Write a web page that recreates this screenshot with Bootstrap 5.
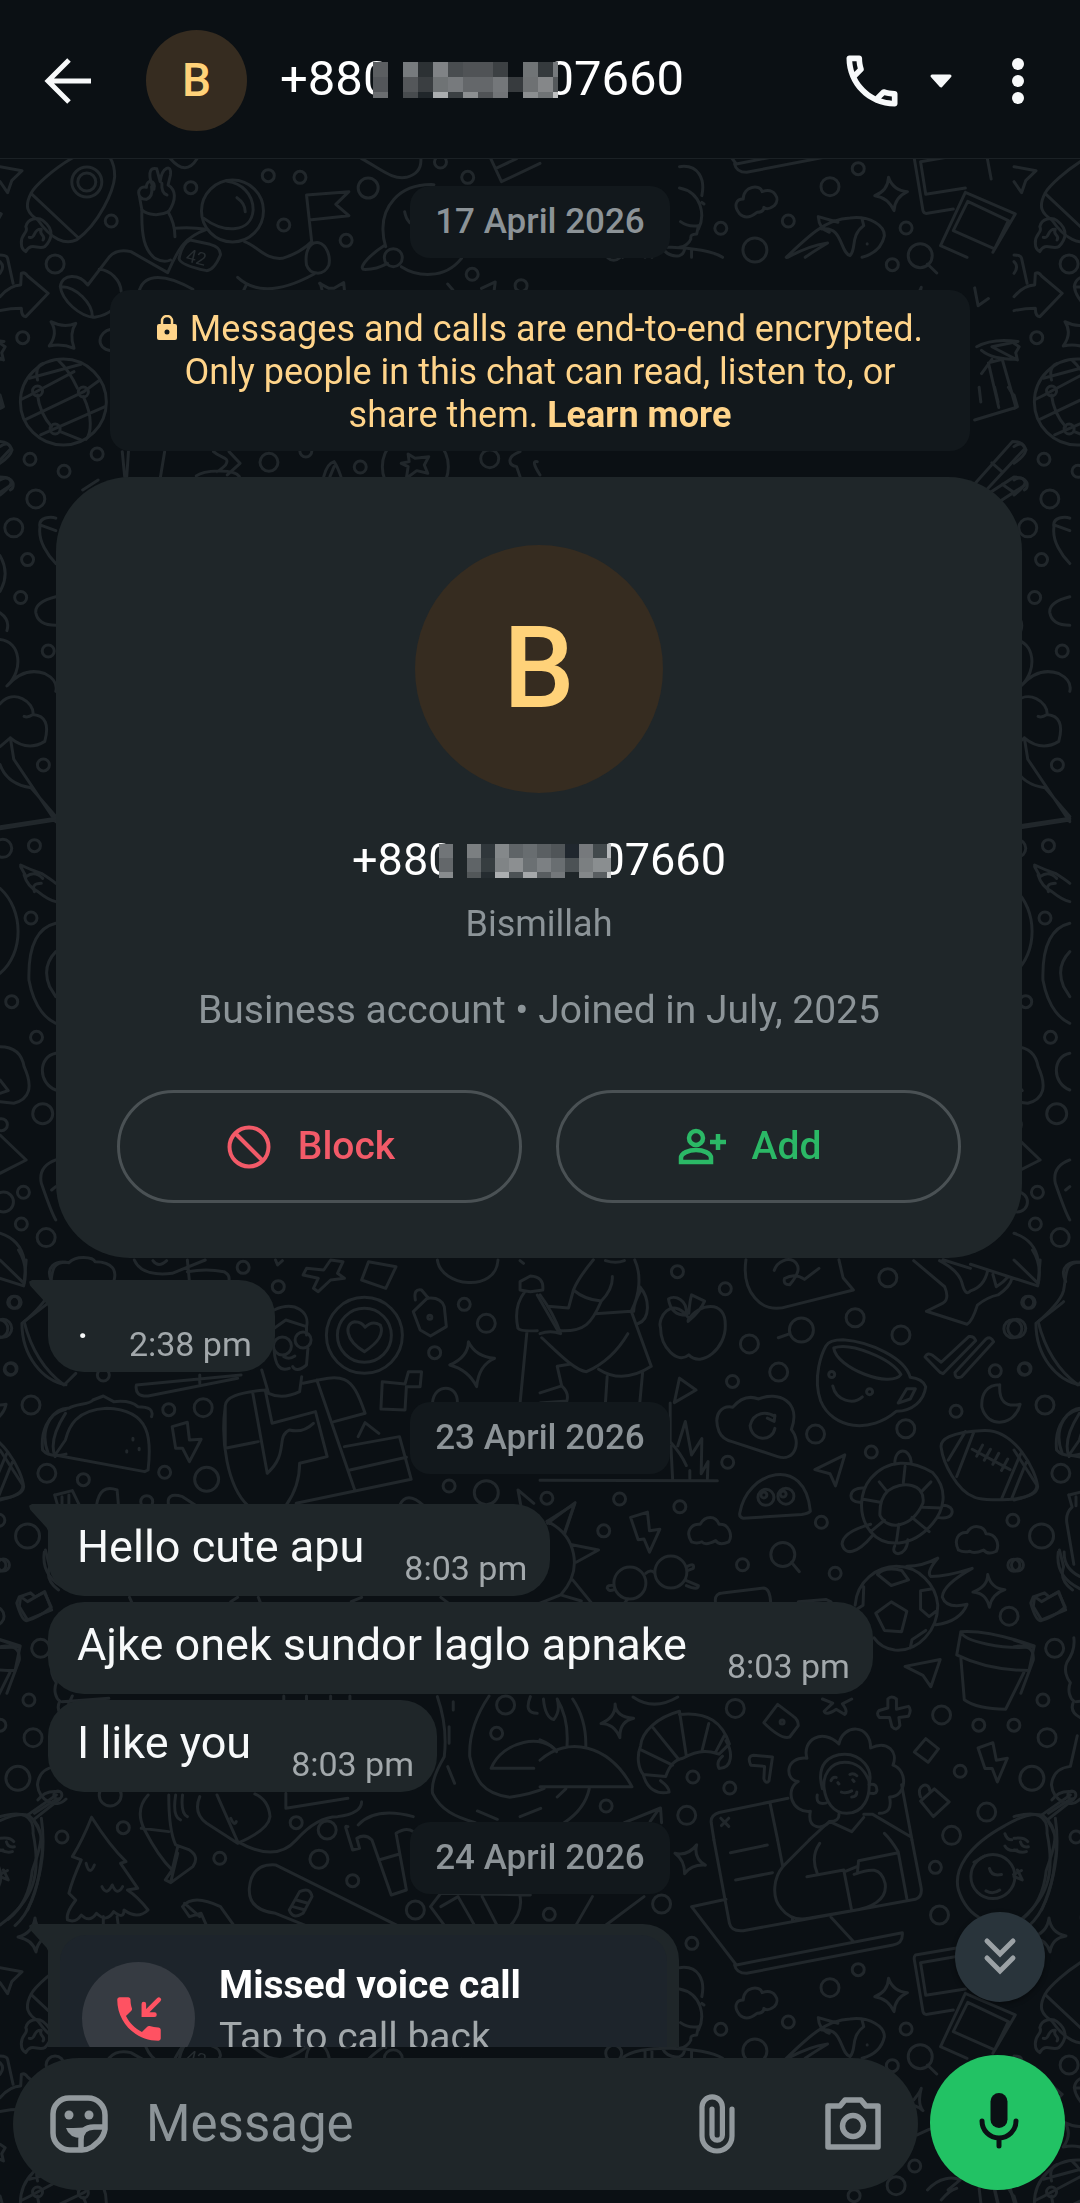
<!DOCTYPE html>
<html lang="en" data-bs-theme="dark">
<head>
<meta charset="utf-8">
<meta name="viewport" content="width=device-width, initial-scale=1">
<title>Chat</title>
<link href="https://cdn.jsdelivr.net/npm/bootstrap@5.3.0/dist/css/bootstrap.min.css" rel="stylesheet">
<style>
  body { font-family: Roboto, "Noto Sans", sans-serif; background: #0b1014; color: #f7f9fa; }
  button { color: inherit; }
  .bare { border: 0; background: none; padding: 0; display: flex; flex-shrink: 0; }
  .wallpaper { inset: 0; width: 100%; height: 100%; z-index: 0; }
  .wallpaper path, .wallpaper ellipse { fill: none; stroke: #21272b; stroke-width: 3px; vector-effect: non-scaling-stroke; stroke-linecap: round; stroke-linejoin: round; }
  .wallpaper text { fill: #262c30; font-size: 18px; }
  .topbar { padding: 30px 50px 27px 38px; background: #0b1014; border-bottom: 1px solid #1b2125; z-index: 2; }
  .call-menu { margin-left: 23px; }
  .more-menu { margin-left: 53px; }
  .initial { border-radius: 50%; background: #362c20; color: #ffd279; font-weight: 500; }
  .initial-sm { width: 101px; height: 101px; font-size: 46px; margin-left: 48px; }
  .initial-lg { width: 248px; height: 248px; font-size: 113px; }
  .caller { font-size: 49px; line-height: 56px; margin: 0 0 0 33px; padding-bottom: 3px; font-weight: 400; }
  .person { font-size: 45px; line-height: 56px; margin: 39px 0 0; font-weight: 400; }
  .caller svg, .person svg { position: relative; flex-shrink: 0; }
  .caller svg { margin: 2px -12px 0 -17px; }
  .person svg { margin: 2px -12px 0 -14px; }
  .thread { z-index: 1; padding: 27px 48px 0; }
  .chip { width: 260px; padding: 14px 0; line-height: 44px; font-size: 35px; font-weight: 500; color: #8c9397; background: #12181c; border-radius: 20px; text-align: center; }
  .day-break { margin: 30px 0; }
  .notice { max-width: 860px; margin: 32px 0 26px; padding: 18px 40px 14px; background: #12181c; color: #ffd48a; border-radius: 20px; font-size: 36px; line-height: 43px; text-align: center; }
  .notice svg { margin: -6px 13px 0 0; }
  .notice a { color: inherit; font-weight: 700; text-decoration: none; }
  .profile { align-self: stretch; margin: 0 10px 22px 8px; padding: 68px 61px 55px; background: #1f2629; border-radius: 74px; }
  .soft { color: #8c9498; }
  .nick { font-size: 36px; line-height: 44px; margin: 14px 0 0; }
  .since { font-size: 39px; line-height: 46px; margin: 41px 0 57px; }
  .choices { gap: 34px; }
  .choice { height: 113px; border: 3px solid #4a5154; border-radius: 57px; background: none; font-size: 39px; font-weight: 500; gap: 26px; padding: 0 18px 0 0; }
  .choice-block { color: #f25a68; }
  .choice-add { color: #2bb866; }
  .bubble { align-self: flex-start; position: relative; background: #1f2629; border-radius: 36px; padding: 16px 23px 8px 29px; }
  .bubble p { font-size: 45px; line-height: 53px; margin: 0; }
  .bubble time { font-size: 34px; line-height: 40px; margin: 28px 0 0 40px; color: #a2a8ab; }
  .bubble + .bubble { margin-top: 6px; }
  .tailed { border-top-left-radius: 0; }
  .tailed::before { content: ""; position: absolute; left: -19px; top: 0; width: 20px; height: 29px; background: #1f2629; clip-path: polygon(0 6%, 15% 0, 100% 0, 100% 100%, 88% 82%, 6% 20%); }
  .call-bubble { padding: 11px 12px; width: 631px; }
  .call-box { background: #1d242b; border-radius: 26px; padding: 27px 22px 27px; gap: 24px; }
  .call-dot { width: 113px; height: 113px; border-radius: 50%; background: #363b42; color: #ff5262; }
  .call-box h2 { font-size: 39px; line-height: 46px; font-weight: 700; margin: 0; }
  .call-box p { font-size: 39px; line-height: 46px; margin: 6px 0 0; color: #a2a8ab; }
  .to-end { position: absolute; right: 35px; bottom: 45px; width: 90px; height: 90px; border-radius: 50%; border: 0; background: #29343b; color: #9ba1a5; z-index: 3; box-shadow: 0 2px 5px #0006; }
  .composer { padding: 8px 15px 13px 13px; gap: 12px; z-index: 2; }
  .entry { height: 132px; min-width: 0; border-radius: 66px; background: #1f2629; padding: 0 35px 0 34px; color: #92999d; }
  .entry input { border: 0; background: none; font-size: 51px; color: #f7f9fa; outline: 0; margin-left: 35px; padding: 0; min-width: 0; }
  .entry input::placeholder { color: #8c9498; opacity: 1; }
  .camera { margin-left: 88px; }
  .mic { width: 135px; height: 135px; border-radius: 50%; border: 0; background: #22c264; color: #0b1014; padding: 0 0 4px 2px; }
</style>
</head>
<body>
<svg class="wallpaper position-fixed" viewBox="0 0 1080 2203" preserveAspectRatio="xMidYMin slice" aria-hidden="true">
 <defs>
 <g id="tile">
  <!-- rocket, astronaut, planet, globe -->
  <g transform="translate(0 150) scale(.3444 .3333)" data-rings="252,96,15 252,96,9 323,213,6 160,342,9 66,563,6 87,928,6 186,964,6 282,912,6 554,113,6 675,183,31 779,77,6 871,82,6 824,225,6 1005,271,6 1069,114,10 1279,36,6 1358,82,6 1371,373,6 1142,323,9 1513,407,6 781,937,9 1046,951,6 1422,926,9 1206,950,33 184,756,43 109,723,5 242,726,5 160,837,5 888,903,6">
   <path d="M0 50L64 62L34 92L22 128L0 95M210 24C150 60 100 110 90 130C70 170 80 190 110 210C150 270 190 285 222 270C290 220 330 120 333 80Q333 45 320 24M90 130L228 264"/>
   <path d="M62 280C60 250 85 248 75 230C80 205 110 200 125 212C160 240 150 270 130 290C110 300 90 275 75 305C65 300 62 290 62 280M85 262C105 268 95 235 120 238C110 255 135 255 125 270"/>
   <path d="M425 148C395 150 395 105 425 112C425 85 455 90 447 118C430 80 430 50 455 56L465 95C470 50 500 40 495 75L488 105C512 120 512 150 490 185C460 200 430 195 412 180L405 140M470 100Q468 130 485 135M440 110Q445 140 425 148"/>
   <path d="M412 180C410 260 420 300 450 325Q475 340 495 330M488 185Q508 220 508 260M508 235Q550 230 600 238C540 260 520 290 487 368L380 305Q340 295 318 320L255 405C230 370 180 370 175 410C180 450 230 500 275 502Q310 495 325 480M180 410C220 410 270 460 268 502M288 358C320 360 350 390 352 425"/>
   <path d="M592 205C650 250 730 250 735 180C735 130 700 100 660 94M688 143Q712 160 712 185M552 270Q530 278 520 325Q522 345 600 362Q622 360 640 315Q642 292 610 283Z"/>
   <path d="M710 275C750 290 770 330 820 325Q870 310 905 275M690 382C740 430 810 430 912 372M715 405L708 420M905 275L890 135L1013 125L975 163L1013 197L898 210M925 278C950 285 960 320 955 345C940 380 900 375 890 345C885 310 895 275 925 278"/>
   <path d="M405 420C420 370 480 370 560 418M1260 104C1150 100 1110 180 1112 240Q1112 265 1120 290M1165 350C1210 380 1290 390 1340 325M1118 285C1080 310 1040 350 1055 358Q1090 360 1125 340M1175 185Q1178 205 1190 218M930 400L935 420M928 400L955 415L970 415L998 398L1000 420M1300 402L1315 420M1398 415L1438 396L1435 420"/>
   <path d="M495 26Q540 80 572 26M1050 26C1110 60 1140 90 1180 82Q1225 70 1222 26M1425 26L1456 95L1568 40M1440 55L1500 26"/>
   <path d="M0 440Q30 405 60 405L62 370Q72 365 80 378L140 430L75 500Q62 500 62 475Q30 475 0 482M0 315Q20 315 22 325L38 400M0 335Q15 350 0 370M0 580L15 590L5 608L10 630L0 625M0 735L10 770L0 775"/>
   <path d="M148 515Q185 535 220 520Q200 550 215 595Q180 580 143 588Q170 550 148 515ZM322 538C285 545 275 595 322 602M85 685L235 643M62 748Q80 740 109 723L215 665M75 808L242 726L290 690M118 855L305 770M109 690Q100 650 125 640M109 735Q115 790 150 830M242 740C270 800 265 850 250 868M225 715Q200 660 170 632M175 845L235 870"/>
   <path d="M0 890Q25 870 35 900Q30 920 0 940M0 990Q25 975 38 1000Q40 1015 30 1020M355 905L362 980M373 905L368 980M478 905L466 980M620 905C640 925 670 920 655 945Q640 960 630 965M665 905L697 940L660 975M570 978C590 960 680 955 695 980M940 980Q950 940 970 935Q980 950 990 980M958 980L970 950M1185 912L1205 925L1245 920L1232 945L1242 970L1210 962L1180 985L1185 950L1165 940L1188 935ZM1510 905C1470 920 1475 945 1500 950L1510 980M1568 975Q1540 930 1560 935M240 1020L285 990"/>
  </g>
  <!-- curls, whale, polaroids -->
  <g transform="translate(540 39) scale(.3444 .3333)" data-rings="27,223,6 353,192,9 441,310,6 924,389,6 842,443,9 721,546,6 525,568,6 624,633,12 1063,567,6 1104,650,12 1023,677,6 1160,225,9 1148,82,6 1088,978,6 1034,1037,9 912,1067,6 214,640,8">
   <path d="M540 178L440 200L570 375L1052 278Q1055 310 1025 315L600 400Q570 400 565 375M505 0L550 250Q555 275 590 272L1090 178Q1112 170 1106 140L1080 0M690 0L705 80M553 38L660 15M568 120L675 98M782 0L705 80C680 110 670 170 700 205Q730 245 780 235L905 212L882 90L775 110M805 100Q785 50 812 10M885 95L920 80M905 212C960 205 1010 180 1002 130C990 80 960 85 912 103M1065 175L1040 35Q1020 0 1000 -20M922 95L925 62L1040 38M845 232L908 302M733 232V240"/>
   <path d="M405 383C460 375 480 420 470 470M405 447C470 460 480 530 460 570M408 548Q430 565 460 560L455 585Q435 585 438 600Q430 620 405 625M470 490L476 495M240 655C280 610 480 620 530 655M355 625Q370 655 405 650Q420 645 420 625M305 632V655M325 632V655M440 632V655"/>
   <path d="M580 525C560 500 570 480 590 480C590 440 640 435 645 458C680 445 700 480 680 500Q660 515 650 505Q650 520 630 520Q600 545 580 525ZM1012 415Q1025 455 1067 458Q1030 475 1028 515Q1010 475 972 470Q1010 455 1012 415Z"/>
   <path d="M715 655C780 590 830 540 900 537C960 530 1000 560 1000 590Q990 640 935 655M808 533Q810 570 840 580M808 533L865 550M720 655Q780 620 835 612Q790 640 770 655M818 570C880 560 870 640 900 650C920 630 900 590 940 560L935 540M950 614V615"/>
   <path d="M1205 325L1090 345Q1085 350 1087 360L1112 515Q1115 525 1125 523L1200 510M1205 350L1105 368L1120 466L1235 447M1205 325L1290 310L1310 420M1235 460L1380 525L1315 640M1235 460L1163 620L1240 655M1242 487L1360 545L1320 630L1200 575ZM1125 675L1152 702M1085 780Q1105 755 1107 745Q1095 790 1112 812Q1100 800 1080 795M1095 885L1130 868M1125 1050C1160 1010 1200 1010 1220 1020L1185 1050M1165 1080Q1190 1050 1210 1045M1275 1045L1280 1089M1320 1045L1330 1089M1360 1045L1375 1070"/>
  </g>
  <!-- right half: apron cook, apple, coffee, turtle, football, plants -->
  <g transform="translate(540 1250) scale(.3444 .4082)" data-rings="399,53,6 538,95,6 608,230,9 693,299,9 759,196,12 915,166,9 1010,68,9 1048,208,9 1373,193,9 1322,296,6 1406,292,6 1416,128,6 559,322,6 800,451,9 1062,438,9 962,495,6 1208,395,6 545,520,6 20,608,6 231,610,6 406,629,6 185,688,6 588,771,6 817,667,6 857,792,6 705,746,12 1373,662,6 1376,772,6 1362,897,9 567,1123,9 444,1291,6 551,1318,6 426,1385,9 192,1362,6 1166,1139,9 1274,1164,6 1376,1164,6 1220,1277,6 1297,1377,9 1195,1434,9 847,305,3 957,347,3 703,1156,2 380,789,16 261,816,16 656,606,8 714,603,8 650,600,3 706,598,3 1315,1535,22">
   <path d="M155 24Q110 70 97 98Q130 122 178 125Q212 95 210 65M97 98L83 142L22 138M0 110Q40 155 60 205Q30 195 0 205M160 156L265 150C290 110 295 60 275 24M265 150L323 285Q240 330 170 292M178 125C150 180 130 200 60 198M5 215C50 250 100 295 135 298Q210 270 255 205M50 285L63 333L0 350M50 285L85 280M63 333Q85 350 78 370L0 375M195 310L190 375M298 300L290 372M290 90C320 120 320 170 285 180M292 100Q272 130 272 150M190 26Q220 34 245 26"/>
   <path d="M430 165C380 110 340 170 350 190C350 240 400 280 432 257C470 290 540 240 538 185C540 120 460 130 430 172M425 160C430 120 390 110 373 120Q380 160 425 160M432 155Q435 125 440 110L478 125Q465 150 430 175"/>
   <path d="M598 24C585 100 640 160 720 138L910 98L880 68L868 24M680 50C690 25 720 20 735 26C760 40 750 60 725 85Q705 85 710 70Q740 55 768 72L810 45M722 206L692 215"/>
   <path d="M1085 26L1175 90Q1190 120 1170 130L1122 150L1240 182Q1255 175 1270 135Q1300 115 1330 110Q1365 90 1370 70M1160 26Q1215 50 1225 80Q1235 115 1250 100Q1290 90 1300 50M1315 60L1325 90Q1345 80 1360 65M1250 35L1445 88Q1460 40 1430 0M1250 45L1170 24"/>
   <path d="M830 235Q840 220 880 220C960 225 1060 265 1075 312Q1110 315 1120 335C1115 370 1080 395 1035 395C960 450 850 440 815 370C790 310 820 250 830 235ZM853 240C900 225 1020 265 1048 305C1020 340 860 290 853 240ZM1040 375L1065 340L1090 340L1075 365ZM850 333C860 370 910 380 936 360"/>
   <path d="M1118 262Q1125 250 1140 258L1165 275L1245 212Q1260 210 1265 222L1170 303L1162 300ZM1205 300L1295 218Q1310 210 1317 225L1225 310Q1205 318 1205 300M1335 330C1300 330 1280 350 1283 385C1300 440 1380 430 1394 378Q1330 390 1335 330"/>
   <path d="M405 314L390 374L453 343ZM520 445C500 400 530 380 560 385C590 355 620 360 635 365C690 345 760 370 730 440C760 470 740 520 690 506L560 470Q530 465 520 445M682 408C660 395 620 395 610 430C615 470 675 470 682 437M682 405L680 420L660 412"/>
   <path d="M378 470Q410 500 425 528M378 470V375M380 480L385 560M400 480L422 420L440 502L470 462L468 548L488 518L486 560M435 540V560M0 564L515 565"/>
   <path d="M580 645C600 540 770 500 785 640Q780 645 760 648L590 657Q578 655 580 645M798 538L885 502L858 578L842 548Z"/>
   <path d="M960 560C1010 510 1080 515 1140 545C1190 590 1170 640 1140 670C1080 730 1000 730 960 690C920 650 930 590 960 560ZM1010 590C1050 565 1120 570 1112 620C1080 680 1010 690 987 650Q985 610 1010 590M985 568L1008 592M1060 530L1055 570M1135 568L1108 592M1165 632L1110 630M1130 690L1080 655M1035 715L1042 672M960 690L1000 662M935 610L988 618M1030 525C1030 480 1075 485 1078 520M940 583C895 580 890 620 930 618M1170 625C1210 625 1205 665 1155 655M1030 725C1015 750 1065 755 1068 710M960 672Q880 690 877 720C885 750 920 745 965 700"/>
   <path d="M1165 485C1160 465 1190 445 1290 442C1380 440 1440 540 1445 580C1440 620 1280 615 1260 605C1210 590 1170 520 1165 485ZM1185 515L1235 445M1210 555L1260 445M1340 610L1395 500M1370 608L1412 520M1255 488L1365 538M1268 505L1285 478M1290 515L1308 488M1315 525L1332 498M1340 540L1358 512"/>
   <path d="M263 655L312 642L318 688L348 684L318 740L302 708L285 710ZM440 715C420 690 440 670 465 672C480 650 510 650 520 672C550 670 560 700 548 715Q520 725 510 712Q480 725 470 715Q455 720 440 715M1215 735C1200 710 1215 690 1240 692C1255 670 1290 675 1295 695C1325 695 1335 720 1325 738Q1300 748 1288 735Q1260 745 1248 738Q1230 742 1215 735"/>
   <path d="M20 665L100 622L70 695M93 722L170 735L105 765M95 808L150 865M28 668C100 700 130 780 60 845L0 865M60 845L120 860M20 665L28 670M307 792Q320 782 332 790M213 822Q195 820 195 828Q200 838 215 832M428 775Q450 765 445 780L430 785M425 810L460 822Q460 835 425 822M245 865L255 855M730 765L753 788M510 865C505 845 520 840 530 840L650 828Q668 830 670 865M750 862L830 856L845 862"/>
   <path d="M915 870C920 810 980 775 1035 775C1100 775 1150 820 1155 870C1155 930 1100 985 1030 980Q990 975 970 950M975 890L1020 862L1065 885L1050 935L1000 932ZM980 795Q1000 775 1050 785L1070 808L1020 822ZM1105 835L1140 830M1105 835L1105 880L1130 898L1150 885M940 825L938 870L920 880M1075 975L1080 955L1120 932M1065 775Q1110 775 1155 755Q1120 790 1135 800Q1180 800 1255 780Q1170 820 1168 850Q1180 880 1240 868Q1220 910 1150 918M1300 795Q1310 830 1350 832Q1312 842 1305 875Q1295 840 1257 838Q1300 825 1300 795M1432 850L1465 840L1478 850L1505 838L1525 875Q1490 900 1455 908Q1440 910 1425 865Z"/>
   <path d="M1222 935Q1300 930 1435 970L1420 1030Q1300 1030 1210 992ZM1222 935C1230 960 1350 980 1432 972M1222 1000L1232 1102Q1270 1125 1352 1125L1405 1035M1060 1020L1162 1003L1135 1070L1112 1042ZM1010 1100Q1020 1090 1035 1100L1035 1125L1070 1118Q1080 1125 1070 1142L1042 1145L1045 1165Q1035 1180 1022 1168L1015 1145L985 1145Q975 1135 985 1128L1010 1122ZM820 1100L850 1110L825 1130Q830 1142 860 1125L885 1138Q895 1130 878 1112L905 1100"/>
   <path d="M218 1112Q220 1145 272 1147Q230 1155 232 1195Q215 1160 177 1160Q220 1145 218 1112M405 1130C340 1145 295 1180 292 1215C280 1240 285 1270 300 1285L365 1290Q380 1250 415 1245C470 1220 500 1230 520 1235L550 1210C530 1160 490 1130 405 1138M328 1170L400 1245M405 1130L425 1240M490 1160L470 1228M535 1190L510 1230M295 1225L385 1262M300 1285C310 1320 340 1335 375 1328Q375 1315 350 1300M540 1202C560 1230 560 1270 520 1270Q510 1255 530 1240"/>
   <path d="M690 1113L650 1158Q700 1200 725 1193L750 1165Q750 1150 735 1142ZM612 1262Q600 1240 620 1238L675 1242L665 1300Q655 1310 650 1295L652 1265ZM1120 1197L1157 1222L1127 1255L1087 1230ZM1272 1220L1315 1207L1325 1250L1357 1245L1328 1303L1313 1270L1292 1270ZM1145 1320L1188 1352L1142 1388L1105 1350ZM1105 1340C1090 1310 1130 1300 1132 1325"/>
   <path d="M0 1250C80 1190 200 1210 267 1315H0M0 1200Q30 1210 45 1225M78 1218Q85 1150 50 1100M133 1218Q135 1150 95 1100M10 1100Q15 1145 40 1150Q60 1130 50 1100M50 1340L75 1320M143 1320Q130 1370 70 1403M245 1403L350 1367L353 1403M320 1400L345 1370M270 1095Q330 1130 400 1095"/>
   <path d="M775 1245C760 1200 820 1170 868 1210C880 1160 960 1160 960 1220C1010 1200 1040 1230 1025 1262C1070 1275 1065 1340 1015 1340Q1025 1380 985 1380M775 1245C710 1240 710 1300 750 1302C710 1320 730 1380 785 1375C775 1420 820 1420 840 1402M820 1320C800 1260 840 1235 885 1235C930 1235 970 1270 955 1310M825 1320C830 1350 850 1380 890 1380C940 1380 960 1340 955 1300C940 1270 920 1255 885 1255C840 1255 820 1290 825 1320M875 1328Q890 1332 905 1325M845 1300Q850 1290 860 1292M900 1285Q910 1280 920 1288M865 1305L868 1308M908 1298L912 1302M905 1340Q920 1340 920 1328M805 1335Q800 1360 830 1355M955 1310Q980 1305 978 1325Q975 1335 955 1330"/>
   <path d="M868 1382Q870 1400 840 1400L782 1445M840 1400L905 1425L940 1390M940 1382L965 1382L1075 1437M1050 1310L1080 1445M720 1343L520 1378Q495 1385 497 1402L505 1445M668 1355L690 1445M525 1392L548 1412M548 1392L527 1410M392 1478Q430 1485 455 1457Q445 1490 480 1507Q440 1505 420 1528Q420 1495 392 1478M1460 1385Q1420 1375 1350 1410C1240 1460 1200 1520 1215 1568Q1235 1620 1285 1640M1460 1385C1510 1420 1500 1450 1470 1520Q1460 1600 1400 1640M1475 1400Q1510 1440 1495 1500Q1480 1610 1420 1655M1455 1385L1540 1335M1475 1395L1550 1345M1350 1430Q1355 1445 1370 1445M1350 1460Q1360 1475 1385 1470M1395 1450Q1400 1465 1418 1462M1305 1515Q1310 1535 1340 1530M1260 1500L1290 1485M1375 1530L1398 1520M1295 1570Q1315 1580 1335 1568"/>
   <path d="M1568 30C1520 30 1530 60 1520 100Q1510 130 1440 180C1440 260 1500 320 1568 330M1568 390C1510 400 1495 450 1500 490Q1520 510 1568 500M1535 600L1545 630Q1525 645 1530 670L1550 770M1505 740Q1495 800 1568 830M1522 740Q1520 780 1568 800M1550 950Q1555 980 1530 1010C1520 1030 1530 1050 1540 1060C1530 1080 1540 1100 1550 1105Q1535 1130 1568 1145M1560 1190L1540 1265Q1490 1270 1485 1310C1490 1350 1540 1370 1568 1345"/>
  </g>
  <!-- left half, upper: grandpa, token, taco, books -->
  <g transform="translate(0 1240) scale(.6888 .3333)" data-rings="404,140,6 353,82,6 529,286,38 529,286,27 674,193,6 706,250,9 631,338,6 45,495,9 16,386,6 245,509,6 295,503,9 239,697,6 68,700,9 121,719,6 300,718,12 652,738,6 706,758,12 150,405,6 22,187,6 4,265,9 40,888,12 213,785,6 410,318,9 440,300,8 624,232,2">
   <path d="M75 125C65 80 80 60 100 68C110 45 135 50 138 65C165 65 170 95 165 125M195 60Q205 110 250 100L298 60M222 62Q230 85 242 62M272 60L275 125M272 95Q300 85 325 95Q335 105 332 125M445 85L470 90L480 60L498 65L490 100L500 115L480 120L462 155L455 145L462 115L440 105ZM525 120L535 65L575 80L560 145ZM635 60C640 140 720 160 723 60M400 60L403 75L410 62M755 62L760 70"/>
   <path d="M529 335C500 300 500 250 515 245Q525 245 530 262Q540 240 552 255C560 290 540 320 529 335M600 215L620 175Q640 170 645 200L648 260L625 288L610 270ZM603 180Q600 145 612 150L622 175M653 375Q680 350 680 305Q690 350 718 355Q695 375 692 440Q680 390 653 375M555 425L588 432L593 395H612L610 440L590 440L588 510L553 507ZM628 488C630 430 665 430 664 488"/>
   <path d="M398 210C430 180 450 220 445 260L415 240L398 265M445 260V285M398 330Q400 400 420 385M447 325L445 375Q430 400 425 380M380 390L390 460Q410 480 435 455L438 410M412 350Q420 360 428 348M198 435L350 405M198 435Q195 470 215 468L345 415M290 405V430M327 500C320 600 330 740 360 797M385 450Q325 460 327 500V625L375 605M367 460L388 700M385 450L395 550L458 515L475 650L435 670M388 700C420 640 400 590 420 570Q440 580 455 550M435 670Q435 740 415 797M440 430C500 400 510 400 530 520L485 545M460 420L515 750M430 790L597 718L580 590L500 620M520 590L530 548L550 580M508 690L590 652"/>
   <path d="M70 640C55 560 80 500 100 505C110 490 130 495 135 480L150 468L165 485Q190 480 200 500Q225 500 220 530M215 690C220 600 220 510 155 505C110 510 100 560 95 600L80 645L210 695ZM95 520Q70 600 80 650M250 560L272 547L275 600L292 598L275 665L265 625H255ZM193 595V600M184 632V636M202 625V629M35 245Q70 190 72 185M35 245Q50 370 93 435L110 400M0 630L33 735Q35 765 0 780M80 765L105 752L115 795M90 770V797M100 765V797M140 797Q145 730 170 750L172 797M245 797Q240 755 265 770L285 797M580 797Q590 750 615 797M0 60L35 130L38 60"/>
   <path d="M755 125L770 108Q790 110 788 150L770 155L755 150ZM762 155Q745 200 752 265Q755 275 780 272M780 165L810 272M765 275L755 490M756 795L752 750L775 790M795 850L835 788L820 880"/>
  </g>
  <!-- left half, lower: tree, carrot, hammer, board, avocado -->
  <g transform="translate(0 1480) scale(.6888 .3333)" data-rings="5,255,6 59,505,9 42,660,6 48,773,9 26,895,12 160,945,11 179,1043,6 90,1071,6 319,1135,6 430,1028,6 475,1050,9 463,1138,9 512,1202,6 734,675,9 721,760,6 603,1290,9 84,945,4">
   <path d="M30 350L40 365L65 335L75 390L40 420L28 380ZM0 500Q30 490 28 540L10 640M0 480L28 500M66 210L72 260Q65 300 85 330M90 665L158 655M105 648L98 680M188 352L192 370M335 365L345 352M375 352L378 368M510 365L525 352M640 352L650 368M412 648V665M445 648V665M480 648V665M508 648V665"/>
   <path d="M635 650Q650 740 645 830Q625 900 628 940C640 990 660 1010 690 1028M710 648Q680 740 682 830C690 900 700 940 740 952Q775 940 790 925M658 665V690M652 740V790M650 860L660 910M693 993L722 1018M755 1010L785 985M713 865H775M713 865C730 780 790 760 808 815M780 700Q760 700 770 650"/>
   <path d="M55 960Q65 930 85 935M50 1000L80 960M0 1010Q50 980 48 1060C60 1180 50 1260 0 1335M60 1015Q70 1150 40 1290M0 1075Q15 1070 20 1085M0 1110Q10 1120 18 1115M0 1190L12 1200L5 1170"/>
   <path d="M133 1012Q120 1080 105 1130L118 1140Q105 1200 100 1240L110 1260Q95 1300 98 1320Q110 1330 118 1305Q130 1330 140 1300Q155 1330 165 1295Q180 1320 180 1290Q200 1320 215 1290Q200 1250 185 1230L200 1225Q185 1180 175 1150L183 1145Q160 1100 133 1012M125 1150Q130 1190 137 1155M148 1220Q155 1250 163 1215Q170 1250 178 1220M150 1310V1370M170 1310L172 1340"/>
   <path d="M215 945Q195 990 210 1050Q230 1130 250 1170L240 1200L248 1208L280 1160Q290 1130 275 1110L255 1095Q245 1050 245 945M205 1045L245 1055M250 1170L258 1100M258 1120L248 1205M255 945Q250 1010 262 1020M265 945Q262 1000 272 1010M290 950Q280 1000 300 1030L345 1090Q390 1050 392 1010Q390 960 370 942M315 945L345 1085M335 1015Q340 1040 343 1025M345 1085Q400 1150 430 1080Q460 1010 490 1010Q525 1000 525 965M415 940V985L505 955"/>
   <path d="M505 1040Q500 1035 503 1050L512 1110L522 1105L518 1075Q530 1060 540 1080L568 1245L590 1230L575 1060Q590 1040 600 1055M520 1035Q545 980 600 1010M550 1140L580 1122M362 1225Q365 1150 400 1155L578 1338M362 1225Q360 1290 400 1300L445 1338M420 1290L435 1235Q450 1220 453 1250L440 1300Q425 1320 420 1290M430 1260L447 1270M425 1280L443 1290M265 1280Q280 1240 320 1280L340 1338M265 1280L275 1310L292 1300L300 1338M268 1270L290 1310M625 1280L640 1240L770 1245M640 1280L665 1250L690 1340M625 1280L650 1350M700 1250L725 1350M755 1250Q760 1300 735 1350M835 1340L860 1250M870 1350L935 1250"/>
  </g>
  <path d="M35 1918Q37 1933 52 1936Q38 1938 36 1952Q33 1940 18 1937Q33 1933 35 1918"/>
  <!-- margins beside the profile card -->
  <g transform="translate(0 270) scale(.6888 .3571)" data-rings="52,641,9 20,722,9 40,811,6 30,917,6 70,1067,6 63,1386,6">
   <path d="M0 630Q20 600 15 590M58 720C55 690 75 690 81 695M58 720C55 760 70 800 81 822M60 715L81 730M81 915Q50 930 52 960Q55 995 81 995M0 960Q15 980 10 1010M0 1035C30 1040 35 1120 10 1165Q35 1110 65 1130Q85 1150 81 1180M0 1215C20 1170 50 1210 48 1245Q40 1255 35 1250M48 1245Q75 1250 65 1320Q40 1350 15 1310L0 1335M15 1310L20 1370L81 1545M0 1385Q10 1440 45 1450L81 1530M0 1565L81 1540M0 800Q15 850 0 900M1410 610L1470 480Q1485 480 1488 500L1430 620M1420 645L1472 580Q1490 580 1490 600L1450 650M1440 540L1455 565M1455 600L1470 620M1415 420L1475 385L1455 250L1435 260L1450 385M1425 290L1440 250M1418 215Q1440 190 1478 200L1440 215L1475 250Q1440 250 1425 225M1415 50L1420 100L1435 80"/>
  </g>
  <g transform="translate(0 820) scale(.6888 .3333)" data-rings="50,77,6 4,85,9 45,294,6 17,545,6 53,652,6 62,881,10 2,914,6 34,1117,6 5,1146,10 31,1212,6 67,1253,9">
   <path d="M0 20L81 -5M30 135Q45 150 60 160Q75 180 81 190M35 165Q40 200 55 215Q70 240 81 245M30 140L38 170Q50 150 62 175M50 215Q45 190 60 190M0 205C35 270 35 400 0 460M81 310Q40 330 42 480C50 570 70 600 81 610M81 395Q60 440 72 500L81 530M0 680Q30 680 35 740Q55 830 20 850L0 845M81 700C55 710 55 790 81 810M0 780L12 812L0 820M0 945L38 1020L0 1060M60 1090Q55 1040 81 1020M60 1090Q75 1180 81 1200M75 1110L81 1100M0 1240Q30 1260 35 1320"/>
  </g>
  <text transform="translate(185 261) rotate(14)">42</text>
 </g>
 </defs>
 <use href="#tile"/><use href="#tile" x="1014"/><use href="#tile" x="-1014"/>
 <use href="#tile" y="1801"/><use href="#tile" x="1014" y="1801"/>
</svg>

<div class="vh-100 d-flex flex-column position-relative overflow-hidden">
  <header class="topbar d-flex align-items-center">
    <button class="bare" aria-label="Back"><svg width="60" height="60" viewBox="0 0 60 60" fill="none" stroke="currentColor" stroke-width="5"><path d="M53 30H11M31 9L10 30l21 21"/></svg></button>
    <div class="initial initial-sm d-flex align-items-center justify-content-center flex-shrink-0">B</div>
    <h1 class="caller d-flex flex-grow-1 align-items-center"><span>+880</span><svg width="185" height="36" viewBox="0 0 185 36" shape-rendering="crispEdges" role="img" aria-label="hidden digits"><path fill="#0b1014" d="M0 0h185v36H0z"/><g id="mosA"></g></svg><span>07660</span></h1>
    <button class="bare" aria-label="Call"><svg width="68" height="68" viewBox="0 0 24 24" fill="currentColor"><path d="M6.540 5c.06.89.21 1.760.45 2.590l-1.200 1.200c-.41-1.200-.67-2.470-.76-3.790h1.510m9.860 12.020c.85.24 1.720.39 2.600.45v1.490c-1.320-.09-2.590-.35-3.800-.75l1.200-1.190M7.500 3H4c-.55 0-1 .45-1 1 0 9.390 7.610 17 17 17 .55 0 1-.45 1-1v-3.490c0-.55-.45-1-1-1-1.240 0-2.450-.2-3.570-.57-.1-.04-.21-.05-.31-.05-.26 0-.51.1-.71.29l-2.200 2.200c-2.830-1.450-5.150-3.760-6.590-6.590l2.200-2.200c.28-.28.36-.67.25-1.020C8.700 6.450 8.500 5.250 8.500 4c0-.55-.45-1-1-1z"/></svg></button>
    <button class="bare call-menu" aria-label="Call options"><svg width="24" height="24" viewBox="0 0 24 24"><path d="M3 7h18L12 17z" fill="currentColor" stroke="currentColor" stroke-width="3" stroke-linejoin="round"/></svg></button>
    <button class="bare more-menu" aria-label="More"><svg width="24" height="50" viewBox="0 0 24 50" fill="currentColor"><circle cx="12" cy="8" r="6"/><circle cx="12" cy="25" r="6"/><circle cx="12" cy="42" r="6"/></svg></button>
  </header>

  <div class="flex-fill position-relative overflow-hidden">
  <main class="thread h-100 overflow-hidden position-relative d-flex flex-column align-items-center">
    <div class="chip flex-shrink-0">17 April 2026</div>
    <div class="notice flex-shrink-0"><svg width="20" height="26" viewBox="0 0 20 26"><path fill="currentColor" fill-rule="evenodd" d="M2 9h16q2 0 2 2v12q0 2-2 2H2q-2 0-2-2V11q0-2 2-2zm8 5.500a2.500 2.500 0 1 0 0 5 2.500 2.500 0 0 0 0-5z"/><path fill="none" stroke="currentColor" stroke-width="2.500" d="M5 10V6a5 5 0 0 1 10 0v4"/></svg>Messages and calls are end-to-end encrypted. Only people in this chat can read, listen to, or share them. <a href="#">Learn more</a></div>

    <section class="profile flex-shrink-0 d-flex flex-column align-items-center">
      <div class="initial initial-lg d-flex align-items-center justify-content-center">B</div>
      <h2 class="person d-flex align-items-center"><span>+880</span><svg width="172" height="34" viewBox="0 0 172 34" shape-rendering="crispEdges" role="img" aria-label="hidden digits"><path fill="#1f2629" d="M0 0h172v34H0z"/><g id="mosB"></g></svg><span>07660</span></h2>
      <p class="nick soft">Bismillah</p>
      <p class="since soft">Business account • Joined in July, 2025</p>
      <div class="choices d-flex w-100">
        <button class="choice choice-block flex-fill w-50 d-flex align-items-center justify-content-center"><svg width="46" height="46" viewBox="0 0 46 46" fill="none" stroke="currentColor" stroke-width="4"><circle cx="23" cy="23" r="19.500"/><path d="M9.500 9.500l27 27"/></svg>Block</button>
        <button class="choice choice-add flex-fill w-50 d-flex align-items-center justify-content-center"><svg width="48" height="38" viewBox="0 0 48 38" fill="none" stroke="currentColor" stroke-width="4.500"><circle cx="18" cy="10" r="7"/><path d="M3 34v-4c0-5 8-8 15-8s15 3 15 8v4zM40 6v16M32 14h16"/></svg>Add</button>
      </div>
    </section>

    <div class="bubble tailed d-flex flex-shrink-0"><p>.</p><time>2:38 pm</time></div>
    <div class="chip day-break flex-shrink-0">23 April 2026</div>
    <div class="bubble tailed d-flex flex-shrink-0"><p>Hello cute apu</p><time>8:03 pm</time></div>
    <div class="bubble d-flex flex-shrink-0"><p>Ajke onek sundor laglo apnake</p><time>8:03 pm</time></div>
    <div class="bubble d-flex flex-shrink-0"><p>I like you</p><time>8:03 pm</time></div>
    <div class="chip day-break flex-shrink-0">24 April 2026</div>
    <div class="bubble tailed call-bubble flex-shrink-0">
      <div class="call-box d-flex">
        <div class="call-dot d-flex align-items-center justify-content-center"><svg width="58" height="58" viewBox="0 0 24 24"><path fill="currentColor" d="M20 15.500c-1.250 0-2.450-.2-3.570-.57-.35-.11-.74-.03-1.020.24l-2.200 2.200c-2.830-1.440-5.150-3.750-6.590-6.590l2.200-2.210c.28-.26.36-.65.25-1C8.700 6.450 8.500 5.250 8.500 4c0-.55-.45-1-1-1H4c-.55 0-1 .45-1 1 0 9.390 7.610 17 17 17 .55 0 1-.45 1-1v-3.500c0-.55-.45-1-1-1z"/><path fill="none" stroke="currentColor" stroke-width="1.900" stroke-linecap="round" d="M20.200 4L14 10.200M14 5.800v4.400h4.400"/></svg></div>
        <div><h2>Missed voice call</h2><p>Tap to call back</p></div>
      </div>
    </div>
  </main>
  <button class="to-end d-flex align-items-center justify-content-center" aria-label="Scroll to latest"><svg width="36" height="40" viewBox="0 0 36 40" fill="none" stroke="currentColor" stroke-width="5" stroke-linecap="round"><path d="M5 4l13 13L31 4M5 21l13 13 13-13"/></svg></button>
  </div>

  <footer class="composer d-flex align-items-end">
    <div class="entry d-flex align-items-center flex-grow-1">
      <button class="bare" aria-label="Stickers"><svg width="64" height="64" viewBox="0 0 64 64" fill="none" stroke="currentColor" stroke-width="5.500"><path d="M22 6h19a17 17 0 0 1 17 17v14Q57 44 52 49l-7 6q-5 3-10 3H23A17 17 0 0 1 6 41V22A16 16 0 0 1 22 6z"/><path d="M34 58V48q0-13 13-13h11"/><path d="M19 36q16 0 21-1l-5 11Q22 46 19 36z" fill="currentColor" stroke="none"/><circle cx="22" cy="23" r="4.500" fill="currentColor" stroke="none"/><circle cx="42" cy="23" r="4.500" fill="currentColor" stroke="none"/></svg></button>
      <input class="flex-grow-1" type="text" placeholder="Message" aria-label="Message">
      <button class="bare" aria-label="Attach"><svg width="36" height="60" viewBox="0 0 36 60" fill="none" stroke="currentColor" stroke-width="5.200" stroke-linecap="round"><path d="M33 15v27a15 15 0 0 1-30 0V13a10.200 10.200 0 0 1 20.400 0v28a5.200 5.200 0 0 1-10.400 0V15"/></svg></button>
      <button class="bare camera" aria-label="Camera"><svg width="60" height="60" viewBox="0 0 60 60" fill="none" stroke="currentColor" stroke-width="5.500" stroke-linejoin="round"><path d="M5 12h12l5-6h16l5 6h12v41H5z"/><circle cx="30" cy="32" r="10.500"/></svg></button>
    </div>
    <button class="mic d-flex align-items-center justify-content-center flex-shrink-0" aria-label="Record voice"><svg width="44" height="60" viewBox="0 0 44 60"><rect x="13.500" y="2" width="17" height="35" rx="8.500" fill="currentColor"/><path fill="none" stroke="currentColor" stroke-width="5" stroke-linecap="round" d="M5 30a17 17 0 0 0 34 0M22 47v8"/></svg></button>
  </footer>
</div>
<script src="https://cdn.jsdelivr.net/npm/bootstrap@5.3.0/dist/js/bootstrap.bundle.min.js"></script>
<script>
  const NS = "http://www.w3.org/2000/svg";
  function add(parent, tag, attrs) {
    const el = document.createElementNS(NS, tag);
    for (const k in attrs) el.setAttribute(k, attrs[k]);
    parent.appendChild(el);
  }
  // Rings scattered between the doodles: "x,y,radius"
  document.querySelectorAll("[data-rings]").forEach(g => {
    const [sx, sy] = g.getAttribute("transform").match(/scale\(([^)]+)\)/)[1].split(" ").map(Number);
    g.dataset.rings.split(" ").forEach(t => {
      const [cx, cy, r] = t.split(",").map(Number);
      add(g, "ellipse", { cx, cy, rx: r / sx, ry: r / sy });
    });
  });
  // Mosaic over the hidden digits, three rows of grey cells
  function mosaic(id, cell, rows) {
    rows.forEach((row, y) => row.split(" ").forEach((c, x) => {
      if (c !== "-") add(document.getElementById(id), "rect", { x: x * cell, y: y * cell, width: cell, height: cell, fill: "#" + c });
    }));
  }
  mosaic("mosA", 15, [
    "5b5e61 - 777b7e 2c3134 808386 494d50 505356 505356 3c4043 - 707476 353a3d 75797c",
    "53565a - 54575a 3a3e41 6f7375 777a7d 64676a 64676a 74777a 373b3e 6e7173 858789 54585b",
    "6a6d70 - 474b4e 20262a abaeb0 3b4043 8c8f91 505356 717477 - 8b8e90 6f7375 c0c2c3"]);
  mosaic("mosB", 14, [
    "717578 - 7b7f81 30373b 84888a 5f6467 686d70 5a5f62 505558 20272e 76797c 42494c b5b8ba",
    "63676a - 5f6467 363d40 808486 8c8f91 6b7073 7c8083 696e71 4c5255 7b7f81 8a8e90 8a8e90",
    "888c8e - 525759 252c30 acafb1 4c5255 a5a8aa 585d60 74787b - 84888a 595e61 c8cacb"]);
</script>
</body>
</html>
